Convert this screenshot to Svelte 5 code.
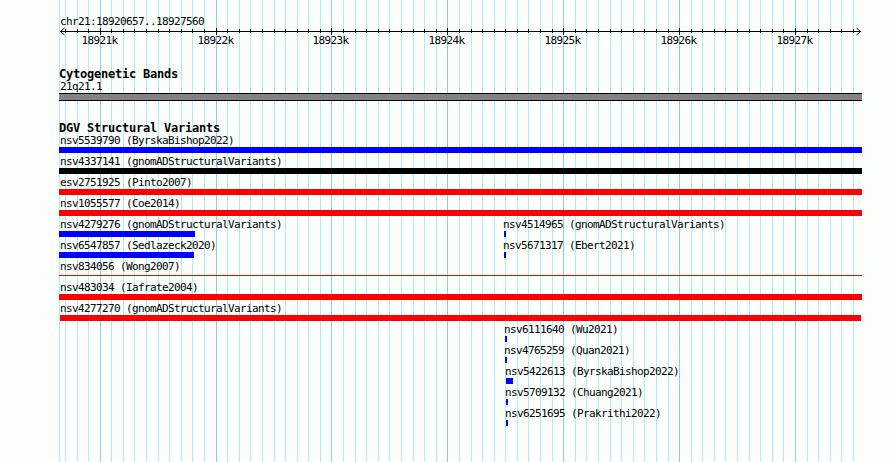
<script lang="ts">
  type Feature = { name: string; x: number; width: number; color: string; label: number; thin?: boolean };

  const REGION = { start: 18920657, end: 18927560 };
  const PANEL_LEFT = 59;
  const FIRST_MAJOR = 100.19;
  const STEP = 11.589;

  const lines = Array.from({ length: 69 }, (_, i) => {
    const n = i - 3;
    return {
      x: Math.floor(FIRST_MAJOR + n * STEP) - PANEL_LEFT,
      major: n % 10 === 0,
      label: `${18921 + n / 10}k`,
    };
  });

  const full = (name: string, color: string): Feature => ({ name, x: 0, width: 803, color, label: 1 });
  const part = (name: string, x: number, width: number, label = x - 1): Feature => ({
    name,
    x,
    width,
    color: "blue",
    label,
  });

  const rows: Feature[][] = [
    [full("nsv5539790 (ByrskaBishop2022)", "blue")],
    [full("nsv4337141 (gnomADStructuralVariants)", "black")],
    [full("esv2751925 (Pinto2007)", "red")],
    [full("nsv1055577 (Coe2014)", "red")],
    [
      part("nsv4279276 (gnomADStructuralVariants)", 0, 136, 1),
      part("nsv4514965 (gnomADStructuralVariants)", 445, 2),
    ],
    [part("nsv6547857 (Sedlazeck2020)", 0, 135, 1), part("nsv5671317 (Ebert2021)", 445, 2)],
    [{ ...full("nsv834056 (Wong2007)", "red"), thin: true }],
    [full("nsv483034 (Iafrate2004)", "red")],
    [{ ...full("nsv4277270 (gnomADStructuralVariants)", "red"), x: 1, width: 801 }],
    [part("nsv6111640 (Wu2021)", 446, 2)],
    [part("nsv4765259 (Quan2021)", 446, 2)],
    [part("nsv5422613 (ByrskaBishop2022)", 447, 7)],
    [part("nsv5709132 (Chuang2021)", 447, 2)],
    [part("nsv6251695 (Prakrithi2022)", 447, 2)],
  ];
</script>

<main class="browser">
  <div class="panel">
    <svg class="grid" width="803" height="462" shape-rendering="crispEdges" aria-hidden="true">
      <rect class="minor" x="0" y="0" width="1" height="462" />
      {#each lines as line}
        <rect class={line.major ? "major" : "minor"} x={line.x} y="0" width="1" height="462" />
      {/each}
    </svg>

    <header class="position">chr21:{REGION.start}..{REGION.end}</header>

    <svg class="ruler" width="803" height="22">
      <g shape-rendering="crispEdges">
        <rect x="1" y="5" width="801" height="1" />
        {#each lines as line}
          <rect x={line.x} y={line.major ? 2 : 3} width="1" height={line.major ? 7 : 4} />
        {/each}
      </g>
      <path d="M5.5 2 L1.5 5.5 L5.5 9 M797.5 2 L801.5 5.5 L797.5 9" />
      {#each lines.filter((l) => l.major) as line}
        <text x={line.x - 18.6} y="18">{line.label}</text>
      {/each}
    </svg>

    <section class="bands">
      <h2>Cytogenetic Bands</h2>
      <div class="name">21q21.1</div>
      <div class="band"></div>
    </section>

    <section class="variants">
      <h2>DGV Structural Variants</h2>
      {#each rows as row}
        <div class="row">
          {#each row as feature}
            <div class="feature">
              <div class="name" style:margin-left="{feature.label}px">{feature.name}</div>
              <div
                class="bar"
                class:thin={feature.thin}
                style:margin-left="{feature.x}px"
                style:width="{feature.width}px"
                style:background-color={feature.color}
              ></div>
            </div>
          {/each}
        </div>
      {/each}
    </section>
  </div>
</main>

<style>
  :global(body) {
    background: #fcfefc;
  }

  .browser {
    height: 462px;
    padding-left: 59px;
    overflow: hidden;
    color: #000;
    font-family: "DejaVu Sans Mono", monospace;
    font-size: 11px;
    line-height: 14px;
    letter-spacing: -0.622px;
  }

  .panel {
    position: relative;
    width: 803px;
    height: 462px;
    padding-top: 15px;
    box-sizing: border-box;
    isolation: isolate;
  }

  .grid {
    position: absolute;
    top: 0;
    left: 0;
    z-index: -1;
  }
  .minor {
    fill: #afeeee;
  }
  .major {
    fill: #87ceeb;
  }

  .position {
    height: 11px;
    padding-left: 1px;
    white-space: pre;
  }

  .ruler {
    display: block;
    overflow: visible;
  }
  .ruler path {
    fill: none;
    stroke: #000;
  }

  h2 {
    height: 12px;
    margin: 0;
    font-size: 12px;
    line-height: 13px;
    font-weight: 700;
    letter-spacing: -0.224px;
    white-space: pre;
  }

  .name {
    height: 13px;
    white-space: pre;
  }

  .bands {
    padding-top: 20px;
  }
  .bands .name {
    padding-left: 1px;
  }
  .band {
    height: 6px;
    border: solid #000;
    border-width: 1px 0;
    background: #848284;
  }

  .variants {
    padding-top: 21px;
  }
  .row {
    display: grid;
    height: 21px;
  }
  .feature {
    grid-area: 1 / 1;
  }
  .bar {
    height: 6px;
  }
  .bar.thin {
    height: 1px;
    margin-top: 2px;
  }
</style>
